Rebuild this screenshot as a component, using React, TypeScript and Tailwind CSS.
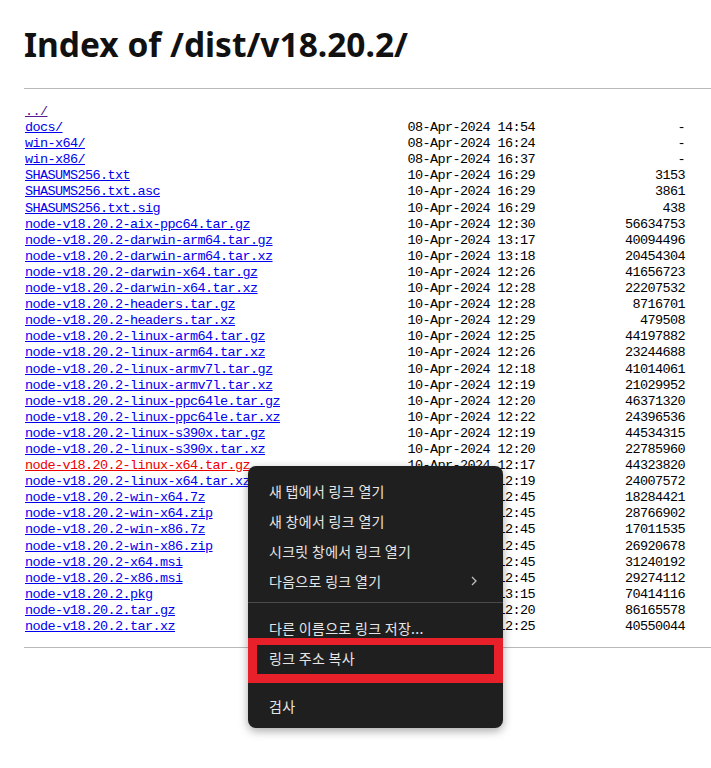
import React from "react";

type Row = { name: string; date: string; size: string; kind?: "visited" | "active" };

const rows: Row[] = [
  { name: "../", date: "", size: "", kind: "visited" },
  { name: "docs/", date: "08-Apr-2024 14:54", size: "-" },
  { name: "win-x64/", date: "08-Apr-2024 16:24", size: "-" },
  { name: "win-x86/", date: "08-Apr-2024 16:37", size: "-" },
  { name: "SHASUMS256.txt", date: "10-Apr-2024 16:29", size: "3153" },
  { name: "SHASUMS256.txt.asc", date: "10-Apr-2024 16:29", size: "3861" },
  { name: "SHASUMS256.txt.sig", date: "10-Apr-2024 16:29", size: "438" },
  { name: "node-v18.20.2-aix-ppc64.tar.gz", date: "10-Apr-2024 12:30", size: "56634753" },
  { name: "node-v18.20.2-darwin-arm64.tar.gz", date: "10-Apr-2024 13:17", size: "40094496" },
  { name: "node-v18.20.2-darwin-arm64.tar.xz", date: "10-Apr-2024 13:18", size: "20454304" },
  { name: "node-v18.20.2-darwin-x64.tar.gz", date: "10-Apr-2024 12:26", size: "41656723" },
  { name: "node-v18.20.2-darwin-x64.tar.xz", date: "10-Apr-2024 12:28", size: "22207532" },
  { name: "node-v18.20.2-headers.tar.gz", date: "10-Apr-2024 12:28", size: "8716701" },
  { name: "node-v18.20.2-headers.tar.xz", date: "10-Apr-2024 12:29", size: "479508" },
  { name: "node-v18.20.2-linux-arm64.tar.gz", date: "10-Apr-2024 12:25", size: "44197882" },
  { name: "node-v18.20.2-linux-arm64.tar.xz", date: "10-Apr-2024 12:26", size: "23244688" },
  { name: "node-v18.20.2-linux-armv7l.tar.gz", date: "10-Apr-2024 12:18", size: "41014061" },
  { name: "node-v18.20.2-linux-armv7l.tar.xz", date: "10-Apr-2024 12:19", size: "21029952" },
  { name: "node-v18.20.2-linux-ppc64le.tar.gz", date: "10-Apr-2024 12:20", size: "46371320" },
  { name: "node-v18.20.2-linux-ppc64le.tar.xz", date: "10-Apr-2024 12:22", size: "24396536" },
  { name: "node-v18.20.2-linux-s390x.tar.gz", date: "10-Apr-2024 12:19", size: "44534315" },
  { name: "node-v18.20.2-linux-s390x.tar.xz", date: "10-Apr-2024 12:20", size: "22785960" },
  { name: "node-v18.20.2-linux-x64.tar.gz", date: "10-Apr-2024 12:17", size: "44323820", kind: "active" },
  { name: "node-v18.20.2-linux-x64.tar.xz", date: "10-Apr-2024 12:19", size: "24007572" },
  { name: "node-v18.20.2-win-x64.7z", date: "10-Apr-2024 12:45", size: "18284421" },
  { name: "node-v18.20.2-win-x64.zip", date: "10-Apr-2024 12:45", size: "28766902" },
  { name: "node-v18.20.2-win-x86.7z", date: "10-Apr-2024 12:45", size: "17011535" },
  { name: "node-v18.20.2-win-x86.zip", date: "10-Apr-2024 12:45", size: "26920678" },
  { name: "node-v18.20.2-x64.msi", date: "10-Apr-2024 12:45", size: "31240192" },
  { name: "node-v18.20.2-x86.msi", date: "10-Apr-2024 12:45", size: "29274112" },
  { name: "node-v18.20.2.pkg", date: "10-Apr-2024 13:15", size: "70414116" },
  { name: "node-v18.20.2.tar.gz", date: "10-Apr-2024 12:20", size: "86165578" },
  { name: "node-v18.20.2.tar.xz", date: "10-Apr-2024 12:25", size: "40550044" },
];

function MenuItem({ label, chevron, marked }: { label: string; chevron?: boolean; marked?: boolean }) {
  return (
    <div className="relative flex h-[30px] items-center justify-between pr-[26px]">
      <span className="ml-[21px] whitespace-nowrap">{label}</span>
      {chevron && (
        <svg width="6" height="10" viewBox="0 0 6 10" fill="none">
          <path d="M1 1l4 4-4 4" stroke="#bdbdbd" strokeWidth="1.3" />
        </svg>
      )}
      {marked && (
        <span className="pointer-events-none absolute -bottom-[10px] -top-[5px] left-0 right-0 border-x-[9px] border-b-[9px] border-t-[7px] border-[#e8202a]" />
      )}
    </div>
  );
}

export default function App() {
  return (
    <div className="relative min-h-[768px] w-[711px] overflow-hidden bg-white text-black">
      <div className="pt-[28px]">
        <h1
          className="pl-[24px] text-[33.5px] font-bold leading-[33px] text-[#111]"
          style={{ fontFamily: '"Noto Sans", "Open Sans", sans-serif' }}
        >
          Index of /dist/v18.20.2/
        </h1>
        <div className="ml-[24px] mt-[27px] h-px bg-[#b9b9b9]" />
        <div
          className="mt-[15px] pl-[25px] text-[13.5px] leading-[16.1px] tracking-[-0.6px]"
          style={{ fontFamily: '"Liberation Mono", "DejaVu Sans Mono", monospace' }}
        >
          {rows.map((r) => (
            <div key={r.name} className="flex h-[16.1px] whitespace-pre">
              <div className="w-[382.5px]">
                <a
                  href="#"
                  className={
                    r.kind === "visited"
                      ? "text-[#551a8b] underline"
                      : r.kind === "active"
                      ? "text-[#ee0000] underline"
                      : "text-[#0000ee] underline"
                  }
                >
                  {r.name}
                </a>
              </div>
              <div className="w-[127.5px]">{r.date}</div>
              <div className="w-[150px] text-right">{r.size}</div>
            </div>
          ))}
        </div>
        <div className="ml-[24px] mt-[12px] h-px bg-[#b9b9b9]" />
      </div>

      {/* context menu */}
      <div
        className="absolute left-[248px] top-[466px] w-[255px] rounded-[8px] bg-[#1f1f1f] pb-[7px] pt-[10px] text-[14px] tracking-[0.3px] text-[#e6e6e6] shadow-[0_3px_10px_rgba(0,0,0,0.35)]"
        style={{ fontFamily: '"Noto Sans CJK KR", "Noto Sans", sans-serif' }}
      >
        <MenuItem label="새 탭에서 링크 열기" />
        <MenuItem label="새 창에서 링크 열기" />
        <MenuItem label="시크릿 창에서 링크 열기" />
        <MenuItem label="다음으로 링크 열기" chevron />
        <div className="mb-[10px] mt-[6px] h-px bg-[#4a4a4a]" />
        <MenuItem label="다른 이름으로 링크 저장..." />
        <MenuItem label="링크 주소 복사" marked />
        <div className="mb-[9px] mt-[8px] h-px bg-[#4a4a4a]" />
        <MenuItem label="검사" />
      </div>
    </div>
  );
}
